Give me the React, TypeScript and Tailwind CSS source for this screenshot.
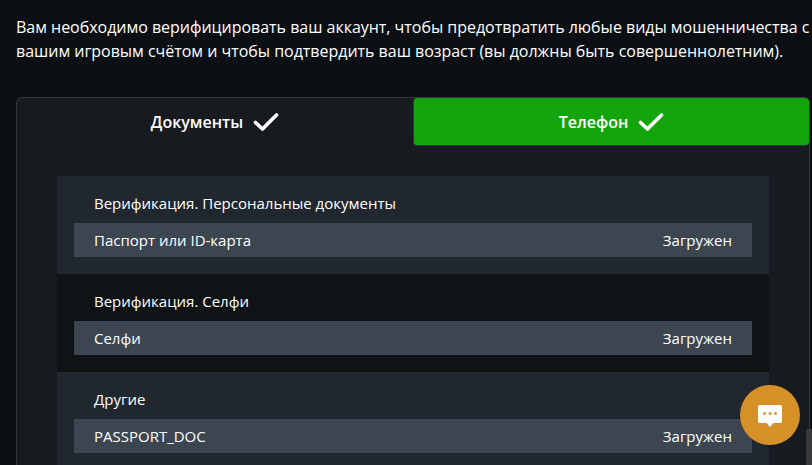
import React from "react";

function Check() {
  return (
    <svg width="26" height="20" viewBox="0 0 26 20" fill="none" className="shrink-0">
      <path d="M2.5 10.5 L9.5 17 L23.5 3" stroke="#fff" strokeWidth="3.6" strokeLinecap="round" strokeLinejoin="round" />
    </svg>
  );
}

function Section({ title, name, bg }: { title: string; name: string; bg: string }) {
  return (
    <div className={`px-[17px] pt-[15px] pb-[17px] ${bg}`}>
      <div className="pl-5 h-[32px] leading-[25px] text-[15px] text-white">{title}</div>
      <div className="flex items-center justify-between h-[34px] pl-5 pr-5 bg-[#3c4651] text-[15px] text-white">
        <span>{name}</span>
        <span>Загружен</span>
      </div>
    </div>
  );
}

export default function App() {
  return (
    <div
      className="relative h-[465px] w-[812px] overflow-hidden bg-[#0c0f14] pl-4 pr-[2px] pt-[15px]"
      style={{ fontFamily: '"Open Sans", "Noto Sans", sans-serif' }}
    >
      <p className="text-[16px] leading-6 tracking-[-0.022px] text-white whitespace-nowrap">
        Вам необходимо верифицировать ваш аккаунт, чтобы предотвратить любые виды мошенничества с
        <br />
        вашим игровым счётом и чтобы подтвердить ваш возраст (вы должны быть совершеннолетним).
      </p>
      <div className="mt-[34px] rounded-t-[6px] border border-[#31363c] bg-[#171b1f]">
        <div className="flex h-[48px]">
          <div className="flex w-[396px] items-center justify-center gap-[10px] text-[16px] font-semibold text-white">
            Документы <Check />
          </div>
          <div className="flex flex-1 items-center justify-center gap-[10px] rounded-[4px] border-b border-l border-[#31363c] bg-[#13a50b] text-[16px] font-semibold text-white">
            Телефон <Check />
          </div>
        </div>
        <div className="mx-10 mt-[30px]">
          <Section title="Верификация. Персональные документы" name="Паспорт или ID-карта" bg="bg-[#21272f]" />
          <Section title="Верификация. Селфи" name="Селфи" bg="bg-[#0f1316]" />
          <Section title="Другие" name="PASSPORT_DOC" bg="bg-[#21272f]" />
        </div>
      </div>
      <div className="absolute right-0 top-[429px] h-9 w-[6px] bg-[#3a3a3a]" />
      <div className="absolute left-[740px] top-[385px] flex h-[60px] w-[60px] items-center justify-center rounded-full bg-[#d69028]">
        <svg width="24" height="22" viewBox="0 0 24 22" className="mt-[1px]">
          <path d="M2 0H22A2 2 0 0 1 24 2V16A2 2 0 0 1 22 18H15.5L12 22L8.5 18H2A2 2 0 0 1 0 16V2A2 2 0 0 1 2 0Z" fill="#fff" />
          <circle cx="6.5" cy="8.5" r="1.4" fill="#d69028" />
          <circle cx="12" cy="8.5" r="1.4" fill="#d69028" />
          <circle cx="17.5" cy="8.5" r="1.4" fill="#d69028" />
        </svg>
      </div>
    </div>
  );
}
